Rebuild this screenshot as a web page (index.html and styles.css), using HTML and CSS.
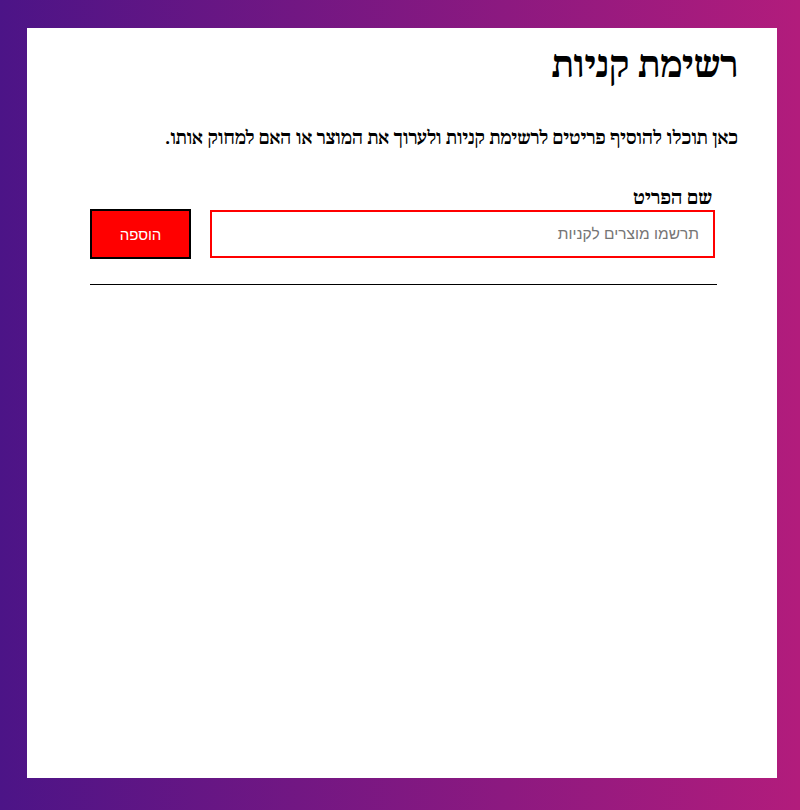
FILE: index.html
```html
<!DOCTYPE html>
<html lang="he" dir="rtl">
<head>
<meta charset="utf-8">
<title>רשימת קניות</title>
<link rel="stylesheet" href="styles.css">
</head>
<body>
<div class="page">
  <main class="card">
    <h1 class="title">רשימת קניות</h1>
    <p class="intro">כאן תוכלו להוסיף פריטים לרשימת קניות ולערוך את המוצר או האם למחוק אותו.</p>
    <form class="add-form">
      <label class="label" for="item">שם הפריט</label>
      <div class="row">
        <input class="input" id="item" type="text" placeholder="תרשמו מוצרים לקניות">
        <button class="btn" type="button">הוספה</button>
      </div>
    </form>
    <hr class="divider">
  </main>
</div>
</body>
</html>
```

FILE: styles.css
```css
html, body {
  margin: 0;
  padding: 0;
}
body {
  font-family: "Noto Serif Hebrew", "Liberation Serif", serif;
  background: linear-gradient(to right, #4c1487, #b21c7c);
  min-height: 810px;
}
.page {
  padding: 28px 23px 32px 27px;
}
.card {
  background: #fff;
  width: 750px;
  height: 750px;
  box-sizing: border-box;
  padding: 16px 39px 0 39px;
}
.title {
  font-size: 35.5px;
  line-height: 44px;
  font-weight: bold;
  margin: 0;
}
.intro {
  font-size: 17.8px;
  line-height: 24px;
  font-weight: bold;
  margin: 39px 0 0 0;
}
.add-form {
  margin: 37px 23px 0 24px;
}
.label {
  display: block;
  font-size: 18.5px;
  line-height: 21px;
  font-weight: bold;
  margin-right: 3px;
}
.row {
  display: flex;
  align-items: center;
  gap: 19px;
}
.input {
  flex: 1;
  height: 48px;
  box-sizing: border-box;
  border: 2px solid #ff0000;
  padding: 0 14px;
  margin: 0;
  font-family: "Liberation Sans", sans-serif;
  font-size: 15.5px;
  outline: none;
}
.input::placeholder {
  color: #757575;
}
.btn {
  width: 101px;
  height: 50px;
  box-sizing: border-box;
  margin: 0;
  background: #ff0000;
  border: 2px solid #000;
  color: #fff;
  font-family: "Liberation Sans", sans-serif;
  font-size: 15px;
}
.divider {
  margin: 25px 21px 0 24px;
  border: 0;
  border-top: 1px solid #000;
}
```
